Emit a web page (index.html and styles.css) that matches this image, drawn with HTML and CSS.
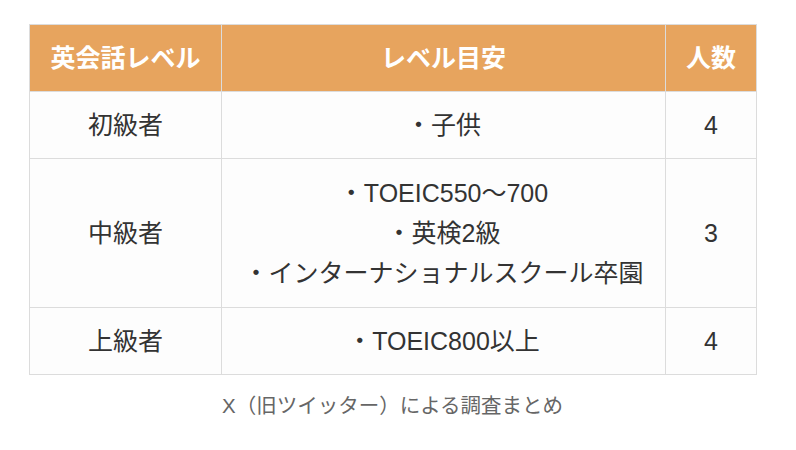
FILE: index.html
```html
<!DOCTYPE html>
<html lang="ja">
<head>
<meta charset="utf-8">
<link rel="stylesheet" href="styles.css">
</head>
<body>
<figure class="wrap">
  <table class="levels">
    <colgroup>
      <col class="c1"><col class="c2"><col class="c3">
    </colgroup>
    <thead>
      <tr><th>英会話レベル</th><th>レベル目安</th><th>人数</th></tr>
    </thead>
    <tbody>
      <tr><td>初級者</td><td>・子供</td><td>4</td></tr>
      <tr><td>中級者</td><td>・TOEIC550〜700<br>・英検2級<br>・インターナショナルスクール卒園</td><td>3</td></tr>
      <tr><td>上級者</td><td>・TOEIC800以上</td><td>4</td></tr>
    </tbody>
  </table>
  <figcaption class="caption">X（旧ツイッター）による調査まとめ</figcaption>
</figure>
</body>
</html>
```
FILE: styles.css
```css
html, body {
  margin: 0;
  padding: 0;
  background: #fff;
}
body {
  font-family: "Liberation Sans", "Noto Sans CJK JP", sans-serif;
  color: #333;
}
.wrap {
  margin: 0;
  padding: 24px 0 0 29px;
  width: 727px;
}
.levels {
  border-collapse: collapse;
  width: 727px;
  table-layout: fixed;
  font-size: 25px;
  line-height: 40px;
}
.c1 { width: 192px; }
.c2 { width: 444px; }
.c3 { width: 91px; }
.levels th,
.levels td {
  border: 1px solid #dcdcdc;
  text-align: center;
  vertical-align: middle;
  padding: 13px 4px 13px;
}
.levels th {
  background: #e7a45e;
  color: #fff;
  font-weight: bold;
  font-size: 25px;
}
.levels td {
  background: #fdfdfd;
}
.levels tbody tr:nth-child(2) td {
  padding-top: 14px;
  padding-bottom: 14px;
}
.caption {
  margin: 16px 0 0;
  text-align: center;
  font-size: 20.5px;
  line-height: 30px;
  color: #666;
}
```
